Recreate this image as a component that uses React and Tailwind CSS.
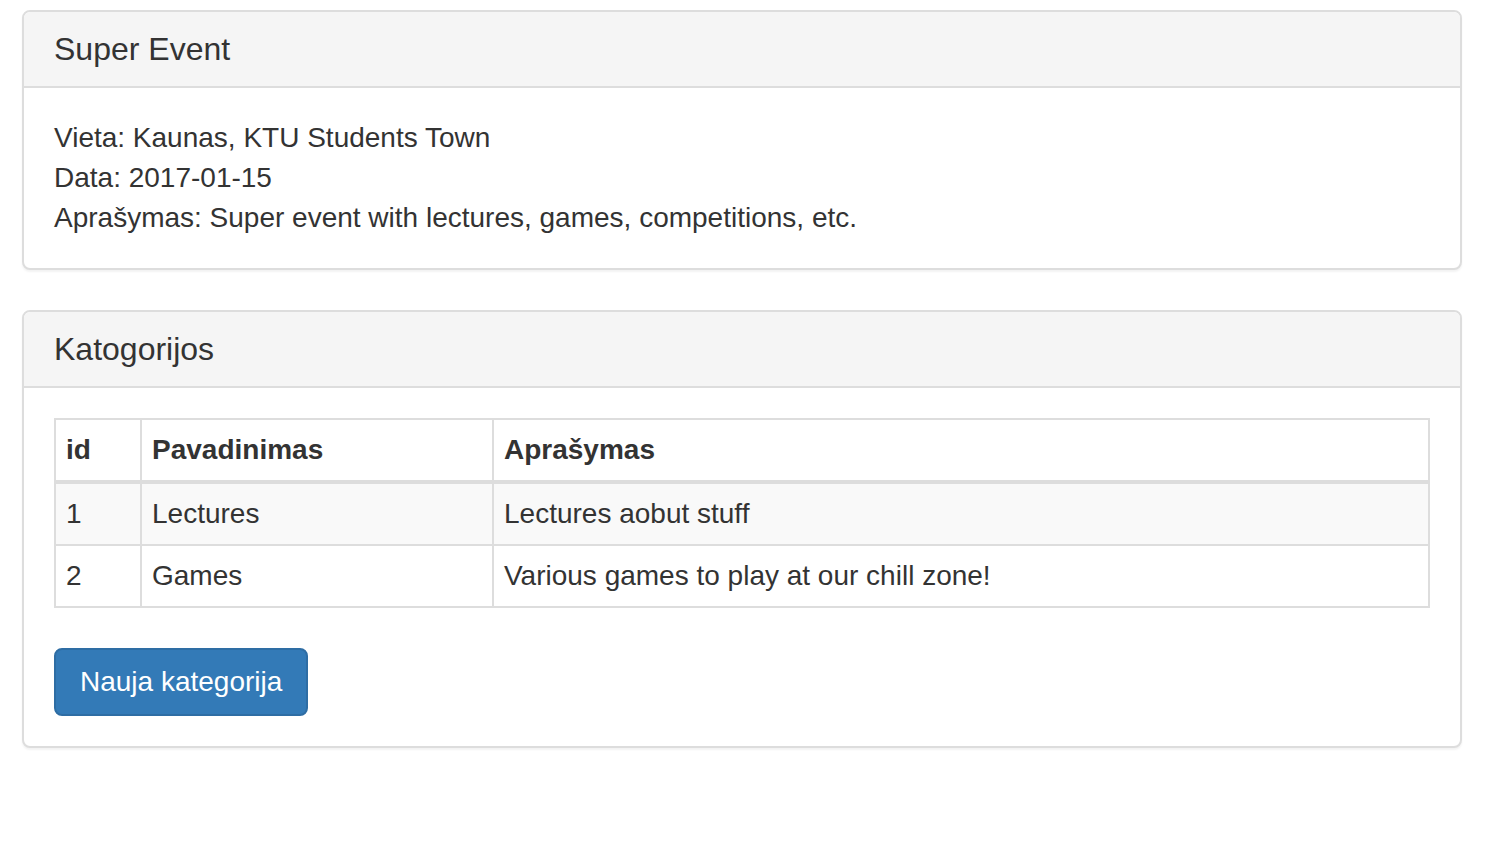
export default function App() {
  const categories = [
    { id: 1, name: 'Lectures', description: 'Lectures aobut stuff' },
    { id: 2, name: 'Games', description: 'Various games to play at our chill zone!' },
  ];

  return (
    <div className="bg-white min-h-[858px] pt-[10px] pl-[22px] text-[#333] font-['Liberation_Sans',Arial,sans-serif]">
      <div className="w-[1440px]">
        <div className="border-2 border-[#ddd] rounded-[8px] bg-white shadow-[0_2px_2px_rgba(0,0,0,0.05)] mb-[40px] overflow-hidden">
          <div className="bg-[#f5f5f5] border-b-2 border-[#ddd] px-[30px] py-[20px]">
            <h3 className="text-[32px] leading-[34px] font-normal">Super Event</h3>
          </div>
          <div className="p-[30px] text-[28px] leading-[40px]">
            <div>Vieta: Kaunas, KTU Students Town</div>
            <div>Data: 2017-01-15</div>
            <div>Aprašymas: Super event with lectures, games, competitions, etc.</div>
          </div>
        </div>

        <div className="border-2 border-[#ddd] rounded-[8px] bg-white shadow-[0_2px_2px_rgba(0,0,0,0.05)] overflow-hidden">
          <div className="bg-[#f5f5f5] border-b-2 border-[#ddd] px-[30px] py-[20px]">
            <h3 className="text-[32px] leading-[34px] font-normal">Katogorijos</h3>
          </div>
          <div className="p-[30px] text-[28px] leading-[40px]">
            <table className="w-full table-fixed border-collapse border-2 border-[#ddd] mb-[40px]">
              <colgroup>
                <col className="w-[86px]" />
                <col className="w-[352px]" />
                <col />
              </colgroup>
              <thead>
                <tr>
                  <th className="text-left font-bold px-[10px] py-[10px] border-2 border-b-4 border-[#ddd]">id</th>
                  <th className="text-left font-bold px-[10px] py-[10px] border-2 border-b-4 border-[#ddd]">Pavadinimas</th>
                  <th className="text-left font-bold px-[10px] py-[10px] border-2 border-b-4 border-[#ddd]">Aprašymas</th>
                </tr>
              </thead>
              <tbody>
                {categories.map((c, i) => (
                  <tr key={c.id} className={i % 2 === 0 ? 'bg-[#f9f9f9]' : 'bg-white'}>
                    <td className="px-[10px] py-[10px] border-2 border-[#ddd]">{c.id}</td>
                    <td className="px-[10px] py-[10px] border-2 border-[#ddd]">{c.name}</td>
                    <td className="px-[10px] py-[10px] border-2 border-[#ddd]">{c.description}</td>
                  </tr>
                ))}
              </tbody>
            </table>
            <button className="bg-[#337ab7] border-2 border-[#2e6da4] text-white rounded-[8px] px-[24px] py-[12px] text-[28px] leading-[40px]">
              Nauja kategorija
            </button>
          </div>
        </div>
      </div>
    </div>
  );
}
